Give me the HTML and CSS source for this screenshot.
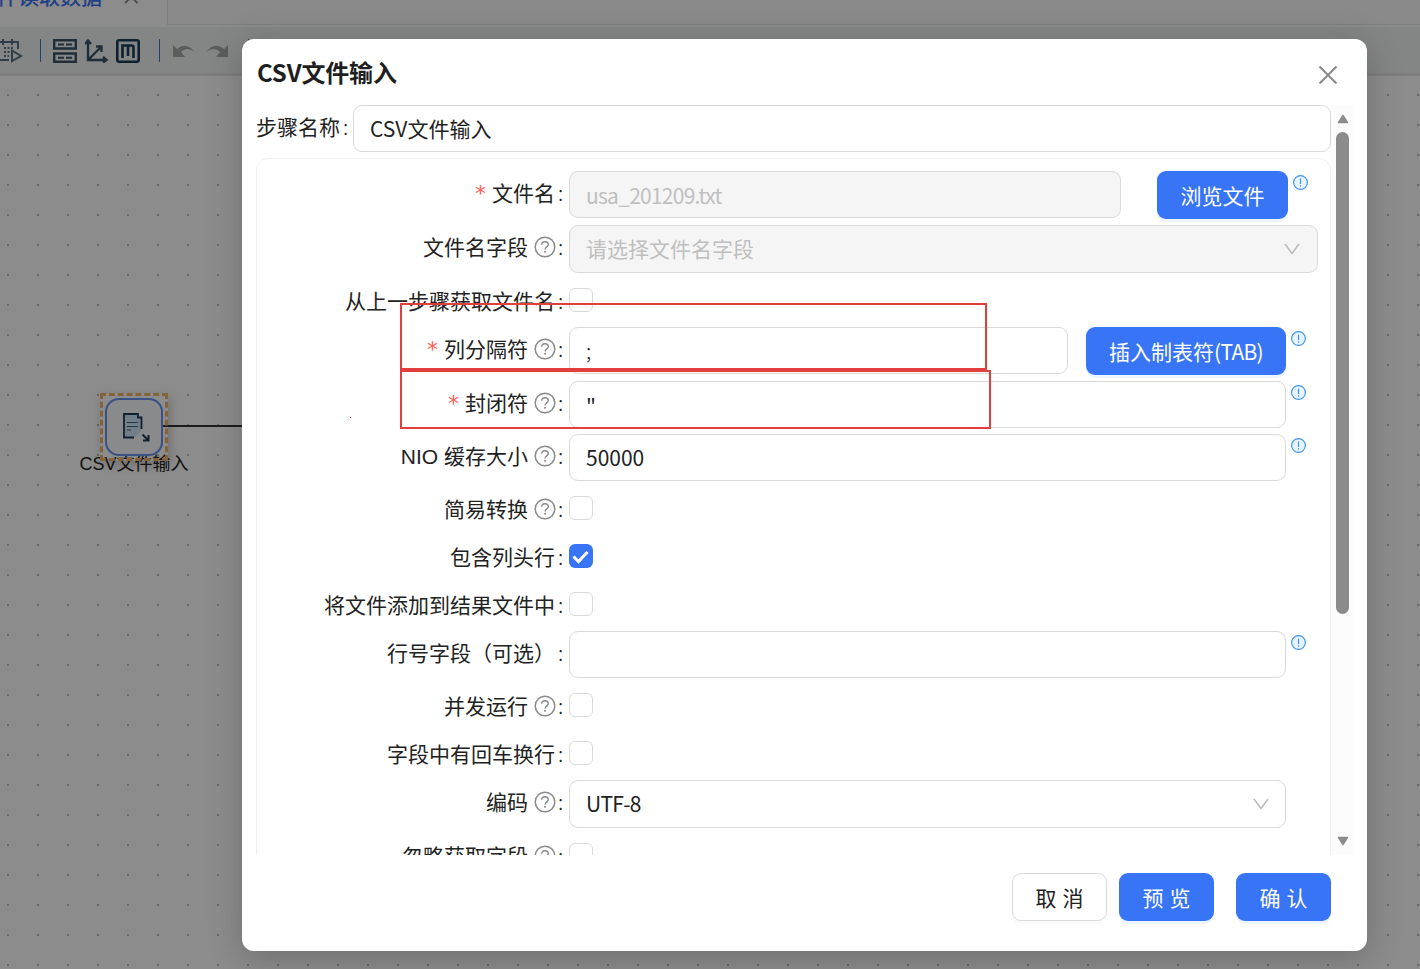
FILE: index.html
```
<!DOCTYPE html>
<html lang="zh-CN">
<head>
  <meta charset="UTF-8">
  <title>CSV文件输入</title>
  <link rel="stylesheet" href="styles.css">
</head>
<body>

<!-- Icons -->
<svg class="sprite" width="0" height="0">
  <symbol id="i-help" viewBox="0 0 22 22">
    <circle cx="11" cy="11" r="9.8" fill="none" stroke="currentColor" stroke-width="1.5"/>
    <path d="M7.7 8.8c0-1.9 1.4-3.1 3.3-3.1s3.3 1.2 3.3 2.9c0 2.3-3.2 2.3-3.2 4.9" fill="none" stroke="currentColor" stroke-width="1.4"/>
    <circle cx="11" cy="15.8" r="1" fill="currentColor"/>
  </symbol>
  <symbol id="i-info" viewBox="0 0 16 16">
    <circle cx="7.500" cy="7.500" r="6.9" fill="#e8f4ff" stroke="#3f95f5" stroke-width="1.2"/>
    <path d="M7.500 3.500v5.500M7.500 10.200v1.500" fill="none" stroke="#3f95f5" stroke-width="1.2"/>
  </symbol>
  <symbol id="i-down" viewBox="0 0 16 12">
    <path d="M1 1l7 9.5L15 1" fill="none" stroke="currentColor" stroke-width="1.5"/>
  </symbol>
</svg>

<!-- Workspace behind the dialog -->
<div class="workspace">
  <div class="tabs">
    <div class="tab active">件读取数据 <span class="tab-close">×</span></div>
    <div class="tab-rest"></div>
  </div>
  <div class="toolbar">
    <svg class="tool run" width="24" height="26" viewBox="0 0 24 26" fill="none" stroke="#5a7082" stroke-width="2">
      <path d="M18 11V4H0M3 1v6M12 1v6M0 22h9"/>
      <path d="M4 10h10M4 14h7M4 18h5" stroke-dasharray="2 1.500"/>
      <path d="M12 12.500l9 5.500-9 5z"/>
    </svg>
    <i class="sep"></i>
    <svg class="tool" width="24" height="24" viewBox="0 0 24 24" fill="none" stroke="#3b5468" stroke-width="2.4">
      <path d="M1.200 1.200h21.600v8.300H1.200zM1.200 14.500h21.600v8.300H1.200z"/>
      <path d="M5 5.400h14M5 18.700h14" stroke-width="2" stroke-dasharray="6 2"/>
    </svg>
    <svg class="tool" width="24" height="24" viewBox="0 0 24 24" fill="none" stroke="#3b5468" stroke-width="2.4">
      <path d="M3 2v19h18M3 21L16 8M0 5l3-3.5L6 5M18 18l3.5 3-3.5 2.5M11 7.500h5.500V13"/>
    </svg>
    <svg class="tool" width="24" height="24" viewBox="0 0 24 24" fill="none" stroke="#1c3c58" stroke-width="2.6">
      <rect x="1.3" y="1.3" width="21.4" height="21.4" rx="2"/>
      <path d="M6.5 19V6.500h9q2 0 2 2V19M12 6.500V17"/>
    </svg>
    <i class="sep second"></i>
    <svg class="tool arrow" width="22" height="14" viewBox="0 0 22 14" fill="#a8a8a8">
      <path d="M0 1l4 4Q13-3 22 8 14 2 8 8l4 5H0z"/>
    </svg>
    <svg class="tool arrow" width="22" height="14" viewBox="0 0 22 14" fill="#a8a8a8">
      <path d="M22 1l-4 4Q9-3 0 8q8-6 14 0l-4 5h12z"/>
    </svg>
    <i class="sep last"></i>
  </div>
  <div class="canvas">
    <div class="link"></div>
    <div class="node">
      <div class="node-select">
        <div class="node-box">
          <svg width="28" height="30" viewBox="0 0 28 30">
            <path d="M2 2h13l4 5v12l-6 6H2z" fill="#cfe6f7"/>
            <path d="M12 25.500H2V2h14v3.500h3.500V17" fill="none" stroke="#1c3c58" stroke-width="1.8"/>
            <path d="M5 10.500h11M5 14.500h11M5 18h4" stroke="#47637a" stroke-width="1"/>
            <path d="M20.500 22.500l6 6M26.500 23v5.500H21" fill="none" stroke="#1c3c58" stroke-width="2"/>
          </svg>
        </div>
      </div>
      <div class="node-name">CSV文件输入</div>
    </div>
  </div>
</div>
<div class="overlay"></div>

<!-- Dialog -->
<div class="dialog">
  <div class="dialog-header">
    <h1>CSV文件输入</h1>
    <svg class="close" width="20" height="20" viewBox="0 0 20 20" fill="none" stroke="#888" stroke-width="2"><path d="M1.500 1.500l17 17M18.500 1.500l-17 17"/></svg>
  </div>

  <div class="dialog-body">
    <div class="scroll-area">
      <div class="step-name">
        <div class="label"><span>步骤名称</span><span class="colon">:</span></div>
        <div class="input">CSV文件输入</div>
      </div>

      <div class="panel">
        <div class="row">
          <div class="label"><b>*</b><span>文件名</span><span class="colon">:</span></div>
          <div class="input disabled file">usa_201209.txt</div>
          <div class="btn primary browse">浏览文件</div>
          <svg class="info"><use href="#i-info"/></svg>
        </div>
        <div class="row">
          <div class="label"><span>文件名字段</span><svg class="help"><use href="#i-help"/></svg><span class="colon">:</span></div>
          <div class="input select disabled full">请选择文件名字段<svg class="down"><use href="#i-down"/></svg></div>
        </div>
        <div class="row check">
          <div class="label"><span>从上一步骤获取文件名</span><span class="colon">:</span></div>
          <div class="checkbox"></div>
        </div>
        <div class="row">
          <div class="label"><b>*</b><span>列分隔符</span><svg class="help"><use href="#i-help"/></svg><span class="colon">:</span></div>
          <div class="input separator">;</div>
          <div class="btn primary tab-btn">插入制表符<span class="latin">(TAB)</span></div>
          <svg class="info"><use href="#i-info"/></svg>
        </div>
        <div class="row short">
          <div class="label"><b>*</b><span>封闭符</span><svg class="help"><use href="#i-help"/></svg><span class="colon">:</span></div>
          <div class="input quote">"</div>
          <svg class="info"><use href="#i-info"/></svg>
        </div>
        <div class="row short">
          <div class="label"><span class="nio">NIO 缓存大小</span><svg class="help"><use href="#i-help"/></svg><span class="colon">:</span></div>
          <div class="input">50000</div>
          <svg class="info"><use href="#i-info"/></svg>
        </div>
        <div class="row check">
          <div class="label"><span>简易转换</span><svg class="help"><use href="#i-help"/></svg><span class="colon">:</span></div>
          <div class="checkbox"></div>
        </div>
        <div class="row check">
          <div class="label"><span>包含列头行</span><span class="colon">:</span></div>
          <div class="checkbox checked"><svg width="24" height="24" viewBox="0 0 24 24" fill="none" stroke="#fff" stroke-width="3"><path d="M4.500 12.500l5 5L18.500 8"/></svg></div>
        </div>
        <div class="row check">
          <div class="label"><span>将文件添加到结果文件中</span><span class="colon">:</span></div>
          <div class="checkbox"></div>
        </div>
        <div class="row short">
          <div class="label"><span>行号字段（可选）</span><span class="colon">:</span></div>
          <div class="input"></div>
          <svg class="info"><use href="#i-info"/></svg>
        </div>
        <div class="row check">
          <div class="label"><span>并发运行</span><svg class="help"><use href="#i-help"/></svg><span class="colon">:</span></div>
          <div class="checkbox"></div>
        </div>
        <div class="row check">
          <div class="label"><span>字段中有回车换行</span><span class="colon">:</span></div>
          <div class="checkbox"></div>
        </div>
        <div class="row">
          <div class="label"><span>编码</span><svg class="help"><use href="#i-help"/></svg><span class="colon">:</span></div>
          <div class="input select"><span class="latin">UTF-8</span><svg class="down"><use href="#i-down"/></svg></div>
        </div>
        <div class="row check">
          <div class="label"><span>忽略获取字段</span><svg class="help"><use href="#i-help"/></svg><span class="colon">:</span></div>
          <div class="checkbox"></div>
        </div>
      </div>
    </div>

    <div class="scrollbar">
      <svg width="12" height="10" viewBox="0 0 12 10"><path d="M6 1.500L10.500 8.500h-9z" fill="#8b8b8b" stroke="#8b8b8b" stroke-width="1.500" stroke-linejoin="round"/></svg>
      <div class="thumb"></div>
      <svg width="12" height="10" viewBox="0 0 12 10"><path d="M6 8.500L10.500 1.500h-9z" fill="#8b8b8b" stroke="#8b8b8b" stroke-width="1.500" stroke-linejoin="round"/></svg>
    </div>
  </div>

  <div class="dialog-footer">
    <div class="btn">取 消</div>
    <div class="btn primary">预 览</div>
    <div class="btn primary ok">确 认</div>
  </div>
</div>

<!-- Highlight marks -->
<div class="mark mark-separator"></div>
<div class="mark mark-enclosure"></div>
<div class="mark-dot"></div>

</body>
</html>
```

FILE: styles.css
```
* {
  box-sizing: border-box;
}

body {
  margin: 0;
  width: 1420px;
  height: 969px;
  overflow: hidden;
  position: relative;
  font-family: "Noto Sans CJK SC", sans-serif;
  font-size: 21px;
  color: #222;
}

svg {
  display: block;
  flex: none;
}

.sprite {
  position: absolute;
}

/* Workspace */
.workspace {
  height: 969px;
  display: flex;
  flex-direction: column;
}

.tabs {
  height: 25px;
  display: flex;
  background: #fff;
}

.tab {
  width: 168px;
  height: 25px;
  line-height: 30px;
  margin-top: -20px;
  margin-left: -3px;
  color: #3a74f6;
  font-weight: 500;
  white-space: nowrap;
}

.tab-close {
  margin-left: 14px;
  color: #888;
}

.tab-rest {
  flex: 1;
  margin-left: 2px;
  background: #fbfbfb;
  border-left: 1px solid #e6e6e6;
  border-bottom: 1px solid #e6e6e6;
}

.toolbar {
  height: 51px;
  display: flex;
  align-items: center;
  padding-top: 1px;
  background: #f0f5f3;
  border-bottom: 3px solid #e3e5e4;
  border-top: 2px solid #fbfdfc;
}

.sep {
  width: 1px;
  height: 23px;
  background: #2f79d8;
  margin: 0 12px 0 16px;
}

.tool {
  margin-right: 7.500px;
}

.tool.run {
  margin-right: 0;
}

.tool.arrow {
  margin: 1px 11px 0 0;
}

.sep.second {
  margin-left: 11px;
  margin-right: 13px;
}

.sep.last {
  margin-left: 9px;
}

.canvas {
  flex: 1;
  position: relative;
  z-index: 0;
  background: #fff radial-gradient(circle, #bbb 1px, transparent 1.300px) -7px 4px / 30px 30px;
}

.link {
  position: absolute;
  left: 162px;
  top: 349px;
  width: 90px;
  height: 2px;
  background: #333;
}

.node {
  position: absolute;
  left: 70px;
  top: 317px;
  width: 128px;
  display: flex;
  flex-direction: column;
  align-items: center;
}

.node-select {
  position: relative;
  z-index: 1;
  width: 68px;
  height: 68px;
  padding: 2px;
  border: 3px dashed #f0b468;
  box-shadow: 2px 4px 10px rgba(0, 0, 0, 0.2);
}

.node-box {
  width: 58px;
  height: 58px;
  display: flex;
  align-items: center;
  justify-content: center;
  padding-left: 3px;
  border: 2px solid #6c92f5;
  border-radius: 14px;
  background: #fafbff;
}

.node-name {
  margin-top: -9px;
  font-family: "Liberation Sans", "Noto Sans CJK SC", sans-serif;
  font-size: 18px;
  line-height: 24px;
  color: #222;
}

.overlay {
  position: absolute;
  inset: 0;
  background: rgba(0, 0, 0, 0.45);
}

/* Dialog */
.dialog {
  position: absolute;
  left: 242px;
  top: 39px;
  width: 1125px;
  height: 912px;
  background: #fff;
  border-radius: 12px;
  box-shadow: 0 9px 24px rgba(0, 0, 0, 0.1), 0 4px 40px rgba(0, 0, 0, 0.12);
}

.dialog-header {
  height: 66px;
  padding: 0 29px 0 15px;
  display: flex;
  justify-content: space-between;
}

.dialog-header h1 {
  margin: 0;
  font-size: 24px;
  font-weight: 600;
  line-height: 66px;
  letter-spacing: -0.15px;
  color: #1f1f1f;
}

.close {
  margin-top: 26px;
}

.dialog-body {
  height: 750px;
  display: flex;
  overflow: hidden;
}

.scroll-area {
  width: 1089px;
  padding-left: 14px;
}

.label {
  display: flex;
  align-items: center;
  justify-content: flex-end;
  height: 42px;
  white-space: nowrap;
}

.label b {
  font-family: "DejaVu Sans", sans-serif;
  font-size: 22px;
  line-height: 22px;
  color: #ff5b57;
  font-weight: 400;
  margin: 4px 6px 0 0;
}

.nio {
  font-family: "Liberation Sans", "Noto Sans CJK SC", sans-serif;
}

.colon {
  width: 6px;
  margin: 0 5px 0 3px;
  font-weight: 300;
}

.help {
  width: 22px;
  height: 22px;
  margin: 2px -0.5px 0 5.500px;
  color: #8a8a8a;
}

.input {
  display: flex;
  align-items: center;
  height: 47px;
  width: 717px;
  padding: 0 16px 2px;
  border: 1px solid #d9d9d9;
  border-radius: 9px;
  background: #fff;
}

.latin {
  letter-spacing: -0.7px;
}

.step-name {
  display: flex;
  height: 53px;
}

.step-name .label {
  width: 97px;
  justify-content: flex-start;
}

.step-name .input {
  width: 978px;
}

.panel {
  height: 750px;
  padding-top: 12px;
  border: 1px solid #f0f0f0;
  border-radius: 12px;
}

.row {
  display: flex;
  height: 48px;
  margin-bottom: 6px;
}

.row.short {
  height: 47px;
}

.row.check {
  height: 42px;
}

.row .label {
  width: 312px;
}

.disabled {
  background: #f5f5f5;
  color: #bfbfbf;
}

.select {
  height: 48px;
  justify-content: space-between;
}

.down {
  width: 16px;
  height: 12px;
  margin-top: 2px;
  color: #bbb;
}

.input.file {
  width: 552px;
  padding-bottom: 0;
  letter-spacing: -0.75px;
}

.input.full {
  width: 749px;
  padding-right: 17px;
}

.input.separator {
  width: 499px;
  font-weight: 300;
}

.input.quote {
  padding-top: 4px;
  padding-bottom: 0;
}

.info {
  width: 16px;
  height: 16px;
  margin: 4px 0 0 5px;
}

.checkbox {
  width: 24px;
  height: 24px;
  margin-top: 9px;
  border: 1px solid #d9d9d9;
  border-radius: 6px;
}

.checkbox.checked {
  border: none;
  background: #3875f6;
}

/* Buttons */
.btn {
  height: 48px;
  width: 95px;
  display: flex;
  align-items: center;
  justify-content: center;
  padding-bottom: 1px;
  border: 1px solid #d9d9d9;
  border-radius: 9px;
  box-shadow: 0 3px 0 rgba(0, 0, 0, 0.02);
  white-space: nowrap;
  word-spacing: 1.500px;
}

.btn.primary {
  border: none;
  background: #3875f6;
  color: #fff;
  box-shadow: 0 3px 0 rgba(5, 120, 255, 0.08);
}

.browse {
  width: 131px;
  margin-left: 36px;
}

.tab-btn {
  width: 200px;
  margin-left: 18px;
}

/* Scrollbar */
.scrollbar {
  width: 23px;
  padding: 9px 0 9px 0;
  display: flex;
  flex-direction: column;
  align-items: center;
  background: #fcfcfc;
}

.thumb {
  width: 13px;
  height: 482px;
  margin: 8px 0 auto;
  border-radius: 7px;
  background: #8b8b8b;
}

.dialog-footer {
  display: flex;
  justify-content: flex-end;
  padding: 18px 36px 0 0;
  gap: 12px;
}

.ok {
  margin-left: 10px;
}

/* Marks */
.mark {
  position: absolute;
  border: 2px solid #e33e3e;
}

.mark-separator {
  left: 400px;
  top: 303px;
  width: 587px;
  height: 68px;
  border-bottom-width: 3px;
}

.mark-enclosure {
  left: 400px;
  top: 370px;
  width: 591px;
  height: 59px;
}

.mark-dot {
  position: absolute;
  left: 350px;
  top: 417px;
  width: 1px;
  height: 1px;
  background: #e33e3e;
}
```
